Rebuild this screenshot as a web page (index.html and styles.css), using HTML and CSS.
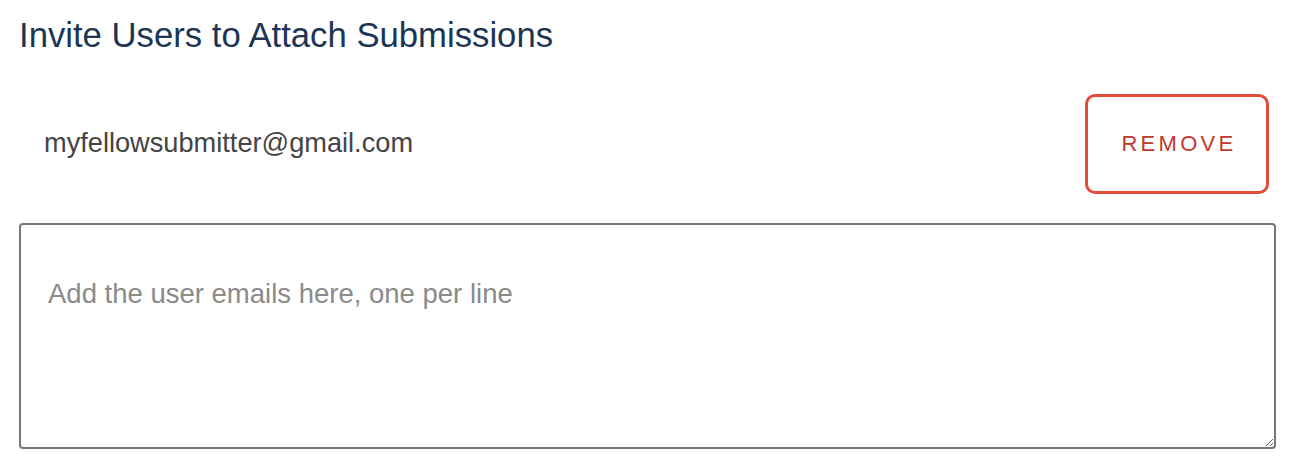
FILE: index.html
```html
<!DOCTYPE html>
<html lang="en">
<head>
  <meta charset="UTF-8" />
  <title>Invite Users</title>
  <link rel="stylesheet" href="styles.css">
</head>
<body>
  <div class="invite">
    <h2 class="invite-title">Invite Users to Attach Submissions</h2>

    <div class="invite-row">
      <span class="invite-email">myfellowsubmitter@gmail.com</span>
      <button type="button" class="remove-btn">Remove</button>
    </div>

    <textarea class="invite-input" placeholder="Add the user emails here, one per line"></textarea>
  </div>
</body>
</html>
```

FILE: styles.css
```css
body {
  margin: 0;
  background-color: #ffffff;
  font-family: 'Liberation Sans', Arial, sans-serif;
}
.invite {
  padding: 15px 15px 0 19px;
}
.invite-title {
  margin: 0;
  font-weight: normal;
  font-size: 34.7px;
  line-height: 40px;
  color: #1d3554;
}
.invite-row {
  display: flex;
  align-items: center;
  justify-content: space-between;
  margin-top: 39px;
  padding-left: 25px;
  padding-right: 7px;
}
.invite-email {
  padding-bottom: 3px;
  font-size: 27.2px;
  color: #444444;
}
.remove-btn {
  width: 184px;
  height: 100px;
  padding: 0 0 0 4px;
  background: #ffffff;
  border: 3px solid #e24c3b;
  border-radius: 10px;
  color: #c0392b;
  font-family: 'Liberation Sans', Arial, sans-serif;
  font-size: 22px;
  letter-spacing: 3.3px;
  text-transform: uppercase;
  cursor: pointer;
}
.invite-input {
  display: block;
  box-sizing: border-box;
  width: 1257px;
  height: 226px;
  margin-top: 29px;
  padding: 53px 27px;
  border: 2px solid #777777;
  border-radius: 4px;
  font-family: 'Liberation Sans', Arial, sans-serif;
  font-size: 27.5px;
  color: #333333;
  resize: vertical;
}
.invite-input::placeholder {
  color: #8a8a8a;
}
```
